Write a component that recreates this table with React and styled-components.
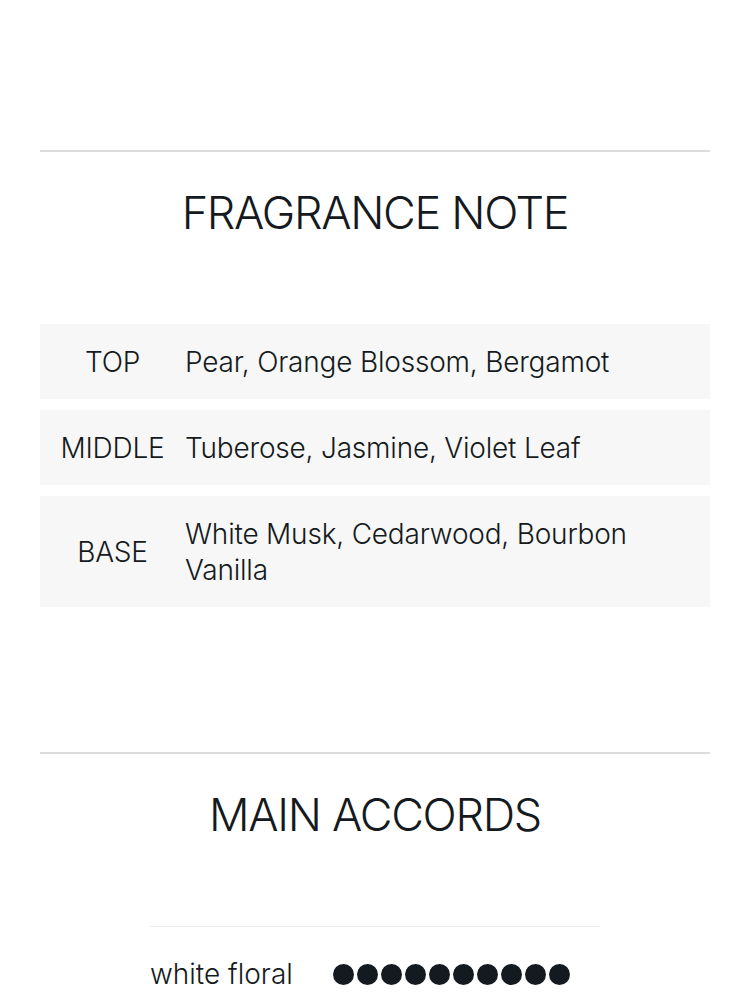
import styled, { createGlobalStyle } from "styled-components";

const GlobalStyle = createGlobalStyle`
  body {
    margin: 0;
    background: #ffffff;
    font-family: Inter, "Noto Sans", sans-serif;
    font-weight: 300;
    color: #141a20;
  }
`;

const Page = styled.div`
  padding: 150px 40px 0;
`;

const Section = styled.section`
  border-top: 2px solid #dcdcdc;
  padding-top: 33px;
  margin-bottom: ${(p) => p.$gapBelow || 0}px;
`;

const Title = styled.h2`
  margin: 0 0 83px;
  font-size: 45px;
  font-weight: 300;
  line-height: 56px;
  letter-spacing: -1.3px;
  text-align: center;
`;

const NoteList = styled.div`
  display: flex;
  flex-direction: column;
  gap: 11px;
`;

const NoteRow = styled.div`
  display: grid;
  grid-template-columns: 145px 1fr;
  align-items: center;
  background: #f7f7f7;
  padding: 19.5px 20px 19.5px 0;
  font-size: 28px;
  line-height: 36px;
  letter-spacing: -0.2px;
`;

const NoteLabel = styled.div`
  text-align: center;
`;

const NoteValue = styled.div``;

const AccordList = styled.div`
  width: 450px;
  margin: 0 auto;
  border-top: 1px solid #ebebeb;
`;

const AccordRow = styled.div`
  display: grid;
  grid-template-columns: 183px 1fr;
  align-items: center;
  padding-top: 27px;
  font-size: 28px;
  line-height: 40px;
`;

const Dots = styled.div`
  display: flex;
  gap: 3px;
`;

const Dot = styled.span`
  width: 21px;
  height: 21px;
  border-radius: 50%;
  background: ${(p) => (p.$on ? "#141a20" : "#e2e2e2")};
`;

const notes = [
  { label: "TOP", value: "Pear, Orange Blossom, Bergamot" },
  { label: "MIDDLE", value: "Tuberose, Jasmine, Violet Leaf" },
  { label: "BASE", value: "White Musk, Cedarwood, Bourbon Vanilla" },
];

const accords = [{ name: "white floral", level: 10 }];

export default function App() {
  return (
    <>
      <GlobalStyle />
      <Page>
        <Section $gapBelow={145}>
          <Title>FRAGRANCE NOTE</Title>
          <NoteList>
            {notes.map((n) => (
              <NoteRow key={n.label}>
                <NoteLabel>{n.label}</NoteLabel>
                <NoteValue>{n.value}</NoteValue>
              </NoteRow>
            ))}
          </NoteList>
        </Section>
        <Section>
          <Title>MAIN ACCORDS</Title>
          <AccordList>
            {accords.map((a) => (
              <AccordRow key={a.name}>
                <span>{a.name}</span>
                <Dots>
                  {Array.from({ length: 10 }).map((_, i) => (
                    <Dot key={i} $on={i < a.level} />
                  ))}
                </Dots>
              </AccordRow>
            ))}
          </AccordList>
        </Section>
      </Page>
    </>
  );
}
